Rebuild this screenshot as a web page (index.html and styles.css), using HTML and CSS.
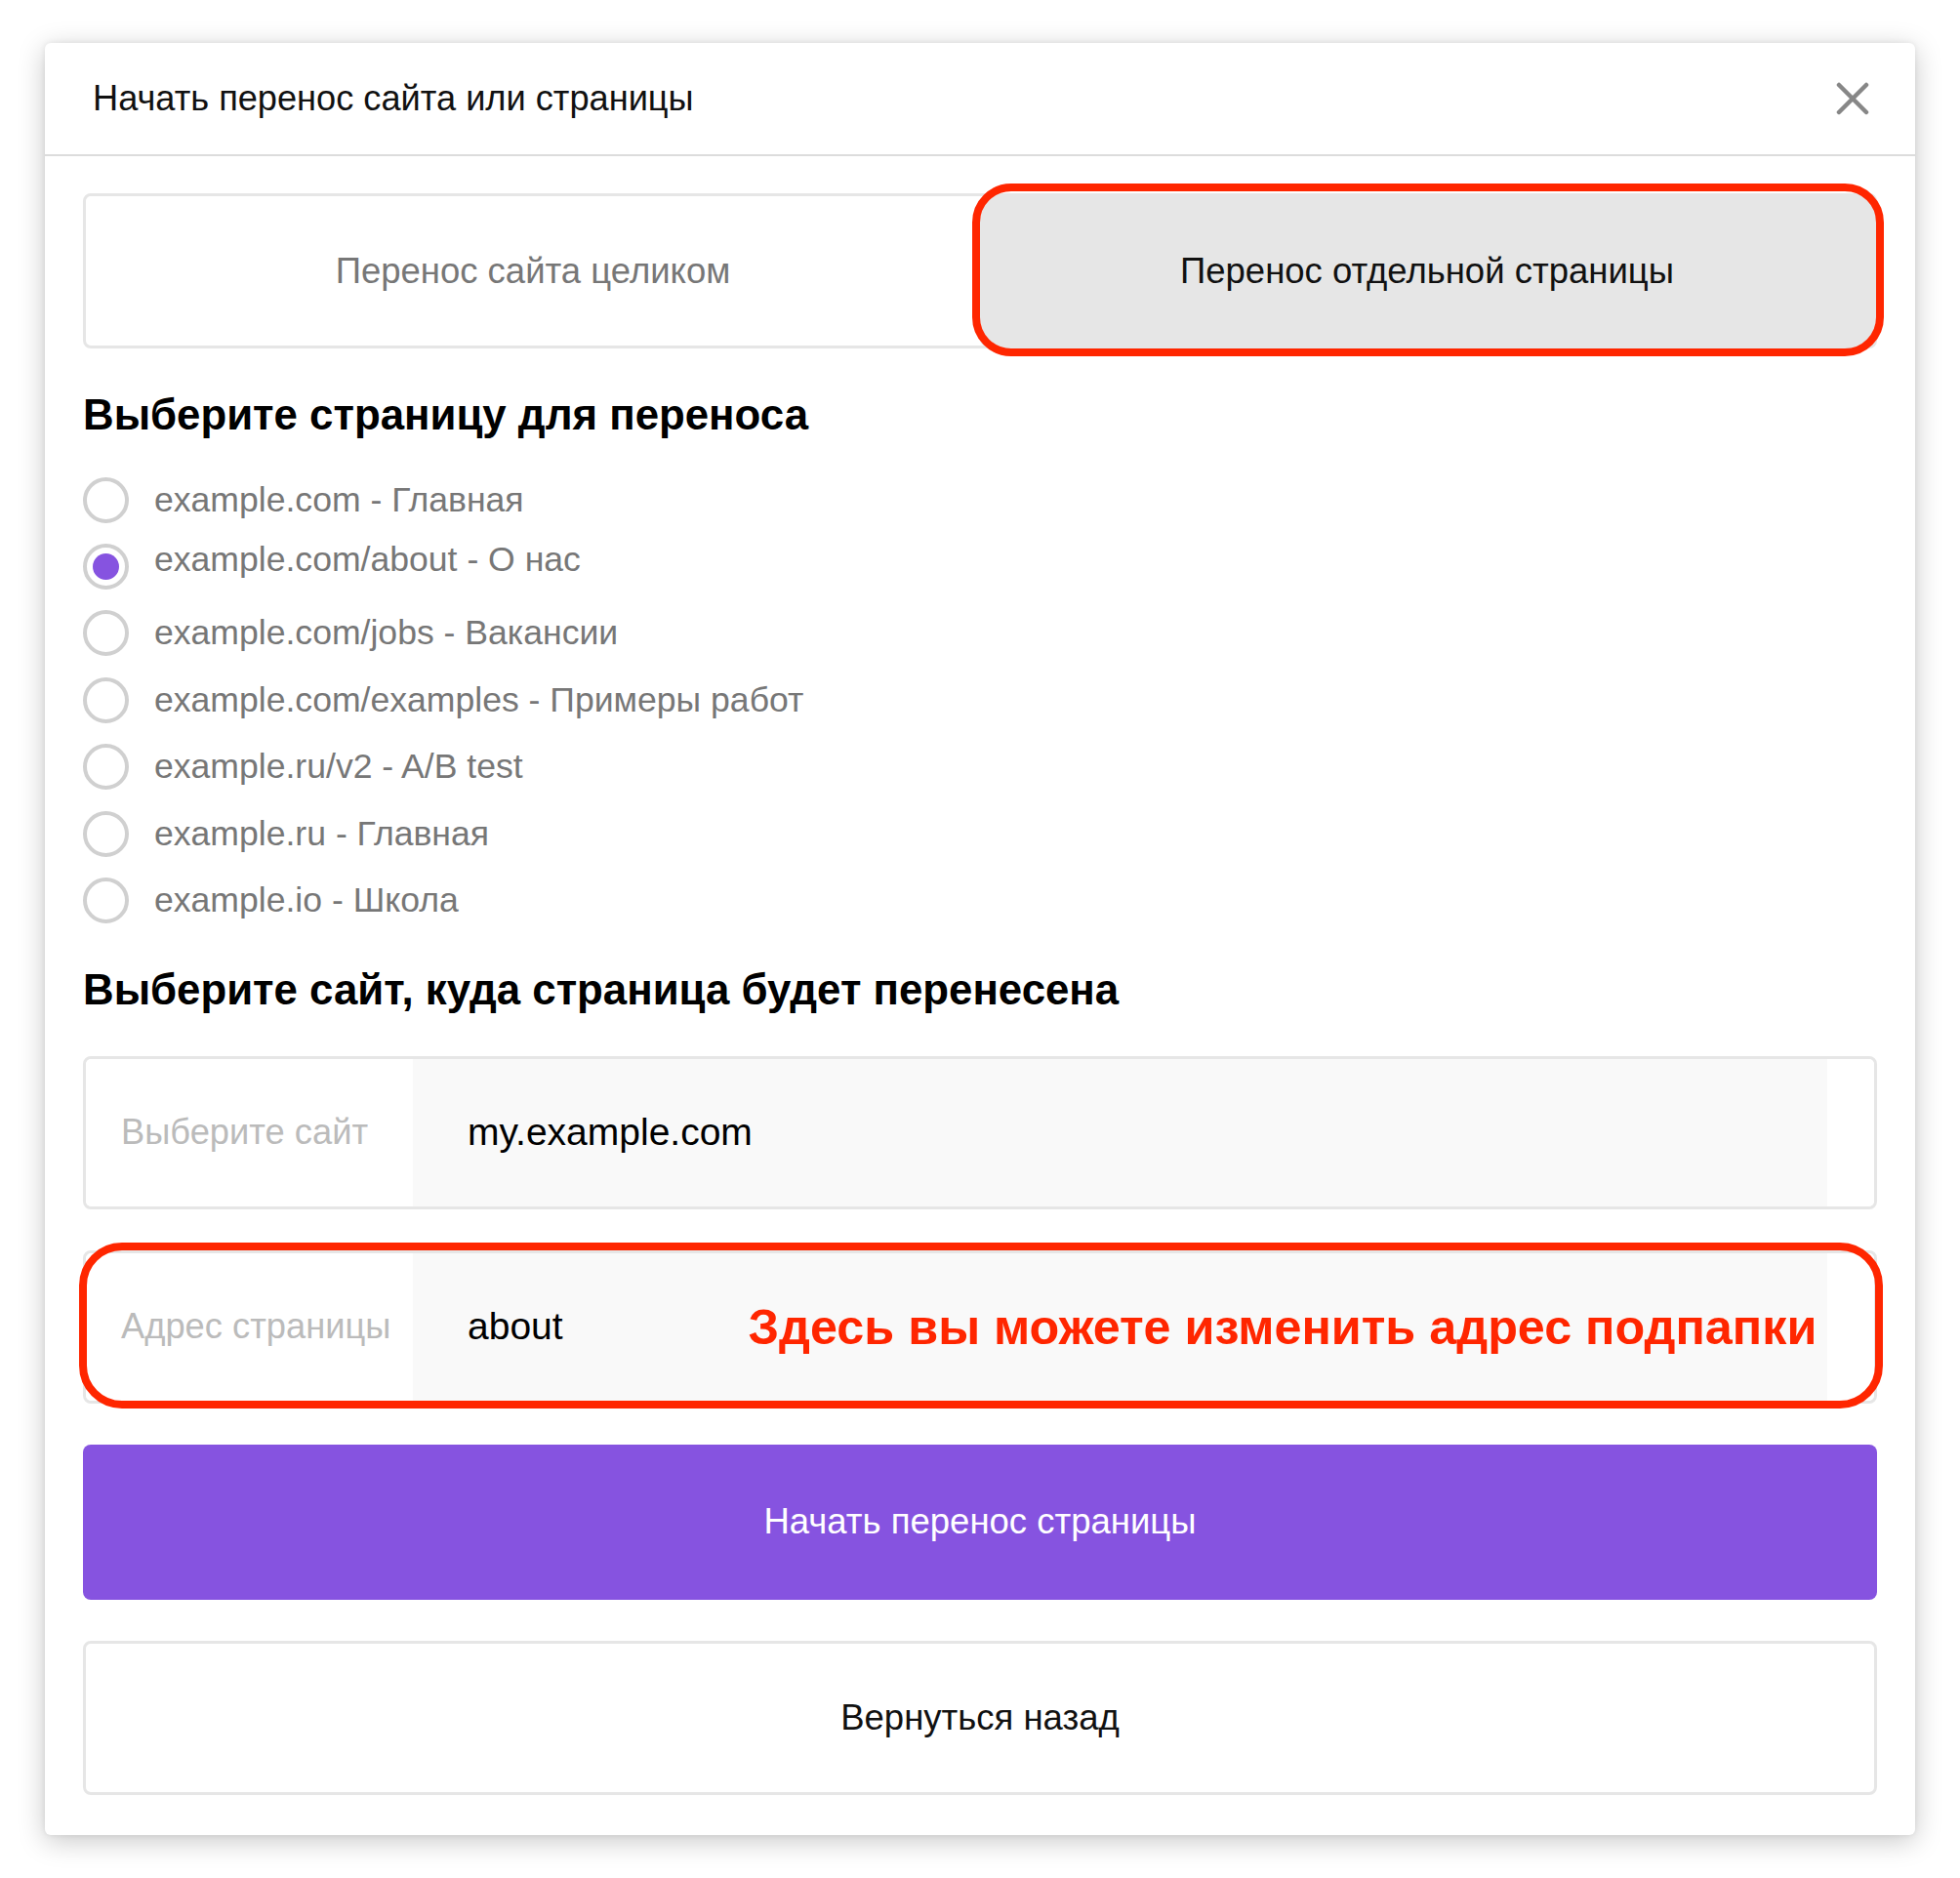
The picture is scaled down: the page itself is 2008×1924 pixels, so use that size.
FILE: index.html
```html
<!DOCTYPE html>
<html lang="ru">
<head>
<meta charset="utf-8">
<title>Начать перенос сайта или страницы</title>
<link rel="stylesheet" href="styles.css">
</head>
<body>
<div class="modal">
  <div class="modal-header">
    <div class="modal-title">Начать перенос сайта или страницы</div>
    <button class="close" aria-label="Закрыть">
      <svg width="34" height="34" viewBox="0 0 34 34"><path d="M3 3L31 31M31 3L3 31" stroke="#878787" stroke-width="4.5" stroke-linecap="round" fill="none"/></svg>
    </button>
  </div>
  <div class="modal-body">
    <div class="tabs">
      <div class="tab">Перенос сайта целиком</div>
      <div class="tab tab-active">Перенос отдельной страницы<span class="mark mark-tab"></span></div>
    </div>

    <h2 class="section-title first">Выберите страницу для переноса</h2>
    <div class="radio-list">
      <label class="radio-row"><span class="radio"></span><span class="radio-text">example.com - Главная</span></label>
      <label class="radio-row"><span class="radio checked"></span><span class="radio-text raised">example.com/about - О нас</span></label>
      <label class="radio-row"><span class="radio"></span><span class="radio-text">example.com/jobs - Вакансии</span></label>
      <label class="radio-row"><span class="radio"></span><span class="radio-text">example.com/examples - Примеры работ</span></label>
      <label class="radio-row"><span class="radio"></span><span class="radio-text">example.ru/v2 - A/B test</span></label>
      <label class="radio-row"><span class="radio"></span><span class="radio-text">example.ru - Главная</span></label>
      <label class="radio-row"><span class="radio"></span><span class="radio-text">example.io - Школа</span></label>
    </div>

    <h2 class="section-title second">Выберите сайт, куда страница будет перенесена</h2>
    <div class="field">
      <div class="field-label">Выберите сайт</div>
      <div class="field-value">my.example.com</div>
      <div class="field-end"></div>
    </div>
    <div class="field field-marked">
      <div class="field-label">Адрес страницы</div>
      <div class="field-value">about<span class="note">Здесь вы можете изменить адрес подпапки</span></div>
      <div class="field-end"></div>
      <span class="mark mark-field"></span>
    </div>

    <button class="btn btn-primary">Начать перенос страницы</button>
    <button class="btn btn-secondary">Вернуться назад</button>
  </div>
</div>
</body>
</html>
```

FILE: styles.css
```css
* { box-sizing: border-box; }
html, body { margin: 0; padding: 0; background: #ffffff; }
body {
  font-family: "Liberation Sans", Arial, Helvetica, sans-serif;
  color: #111111;
  padding: 44px 46px;
  width: 2008px;
}
.modal {
  width: 1916px;
  height: 1836px;
  background: #ffffff;
  border-radius: 6px;
  box-shadow: 0 6px 28px rgba(0, 0, 0, 0.22), 0 0 6px rgba(0, 0, 0, 0.08);
  display: flex;
  flex-direction: column;
}
.modal-header {
  flex: none;
  height: 116px;
  border-bottom: 2px solid #dcdcdc;
  display: flex;
  align-items: center;
  justify-content: space-between;
  padding: 0 47px 0 49px;
}
.modal-title { font-size: 36.2px; color: #111; }
.close {
  border: 0; background: none; padding: 0; margin: 0;
  width: 34px; height: 34px; display: block;
}
.close svg { display: block; }
.modal-body {
  flex: none;
  padding: 38px 39px 41px 39px;
  display: flex;
  flex-direction: column;
}
.tabs {
  flex: none;
  height: 159px;
  display: flex;
  border: 3px solid #e6e6e6;
  border-radius: 8px;
}
.tab {
  flex: 1;
  display: flex;
  align-items: center;
  justify-content: center;
  font-size: 36.5px;
  color: #777777;
  position: relative;
}
.tab-active {
  background: #e6e6e6;
  color: #111111;
  border-radius: 6px;
}
.mark {
  position: absolute;
  border: 8px solid #ff2600;
  pointer-events: none;
}
.mark-tab {
  top: -13px; bottom: -11px; left: -8px; right: -10px;
  border-radius: 40px;
}
.section-title {
  margin: 0;
  font-size: 43.8px;
  line-height: 48px;
  font-weight: 700;
  color: #000;
}
.section-title.first { margin-top: 44px; }
.section-title.second { margin-top: 33px; }
.radio-list {
  margin-top: 29px;
  display: flex;
  flex-direction: column;
}
.radio-row {
  height: 68.4px;
  display: flex;
  align-items: center;
  gap: 26px;
}
.radio {
  width: 47px; height: 47px;
  border: 4px solid #d0d0d0;
  border-radius: 50%;
  display: flex;
  align-items: center;
  justify-content: center;
  flex: none;
}
.radio.checked::after {
  content: "";
  width: 27px; height: 27px;
  border-radius: 50%;
  background: #8653e0;
}
.radio-text { font-size: 35.6px; color: #777777; }
.radio-text.raised { position: relative; top: -7px; }
.field {
  flex: none;
  margin-top: 44px;
  height: 157px;
  border: 3px solid #e6e6e6;
  border-radius: 8px;
  display: flex;
  position: relative;
}
.field-marked { margin-top: 42px; }
.field-label {
  width: 335px;
  display: flex;
  align-items: center;
  padding-left: 36px;
  font-size: 36.3px;
  color: #bbbbbb;
  background: #fff;
  border-radius: 6px 0 0 6px;
}
.field-value {
  flex: 1;
  background: #f9f9f9;
  display: flex;
  align-items: center;
  padding-left: 56px;
  font-size: 39px;
  color: #000;
}
.field-end { width: 48px; background: #fff; border-radius: 0 6px 6px 0; }
.note {
  margin-left: 190px;
  font-size: 50.3px;
  font-weight: 700;
  color: #ff2600;
}
.mark-field {
  top: -11px; bottom: -8px; left: -7px; right: -9px;
  border-radius: 44px;
}
.btn {
  flex: none;
  display: block;
  width: 100%;
  height: 159px;
  border-radius: 8px;
  font-family: inherit;
  font-size: 36.5px;
  cursor: pointer;
}
.btn-primary {
  margin-top: 42px;
  background: #8653e0;
  border: 0;
  color: #ffffff;
}
.btn-secondary {
  margin-top: 42px;
  height: 158px;
  background: #ffffff;
  border: 3px solid #e6e6e6;
  color: #111111;
}
```
